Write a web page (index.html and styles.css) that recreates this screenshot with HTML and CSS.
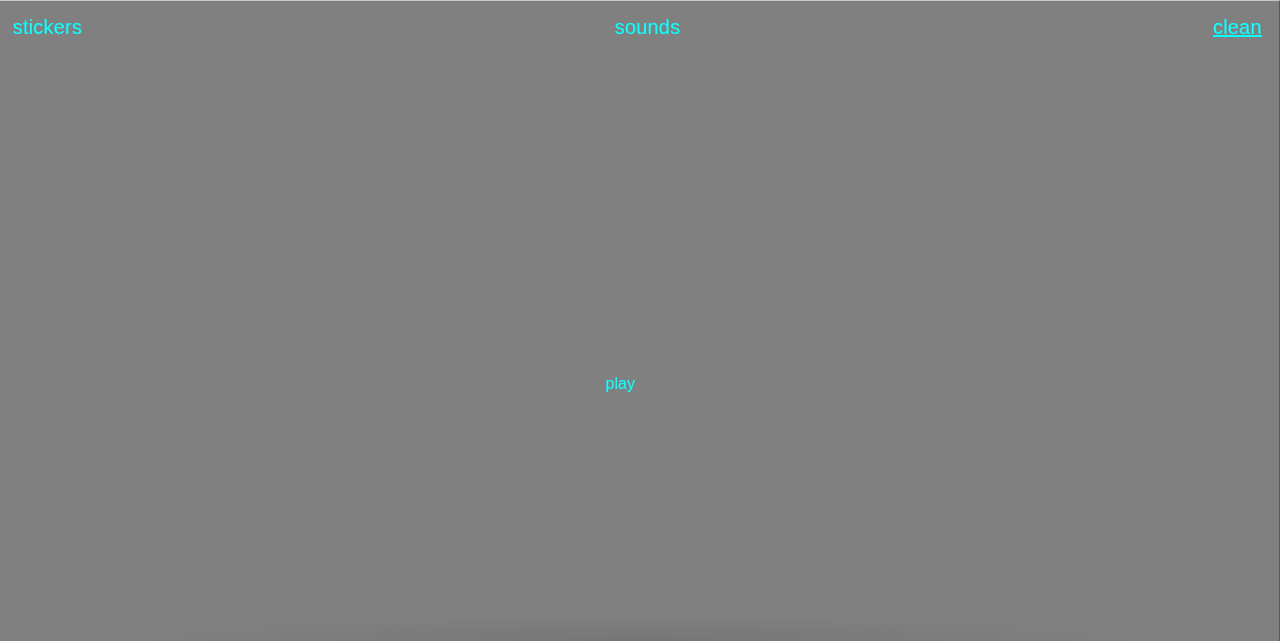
FILE: index.html
```html
<!DOCTYPE html>
<html>
<head>
<meta charset="utf-8">
<link rel="stylesheet" href="styles.css">
</head>
<body>
<div class="app">
  <nav class="topbar">
    <a class="nav-item nav-left">stickers</a>
    <a class="nav-item nav-center">sounds</a>
    <a class="nav-item nav-right" href="#">clean</a>
  </nav>
  <main class="stage">
    <span class="play">play</span>
  </main>
</div>
</body>
</html>
```
FILE: styles.css
```css
html, body {
  margin: 0;
  padding: 0;
  height: 100%;
  background: #808080;
}
.app {
  height: 641px;
  box-sizing: border-box;
  border-top: 1px solid #c8c8c8;
  border-right: 1px solid #5a5a5a;
  display: flex;
  flex-direction: column;
  font-family: "Liberation Sans", Arial, sans-serif;
  color: #00ffff;
  background: radial-gradient(ellipse 40% 4% at 50% 100%, rgba(0,0,0,0.08), rgba(0,0,0,0));
}
.topbar {
  display: flex;
  justify-content: space-between;
  align-items: center;
  padding: 14px 17px 0 13px;
  font-size: 20px;
  line-height: 24px;
  letter-spacing: 0.2px;
}
.nav-item {
  color: #00ffff;
  text-decoration: none;
}
.nav-right {
  text-decoration: underline;
}
.stage {
  flex: 1;
  display: flex;
  justify-content: center;
  padding-top: 335px;
  padding-right: 38px;
}
.play {
  font-size: 16px;
  line-height: 20px;
  height: 20px;
}
```
